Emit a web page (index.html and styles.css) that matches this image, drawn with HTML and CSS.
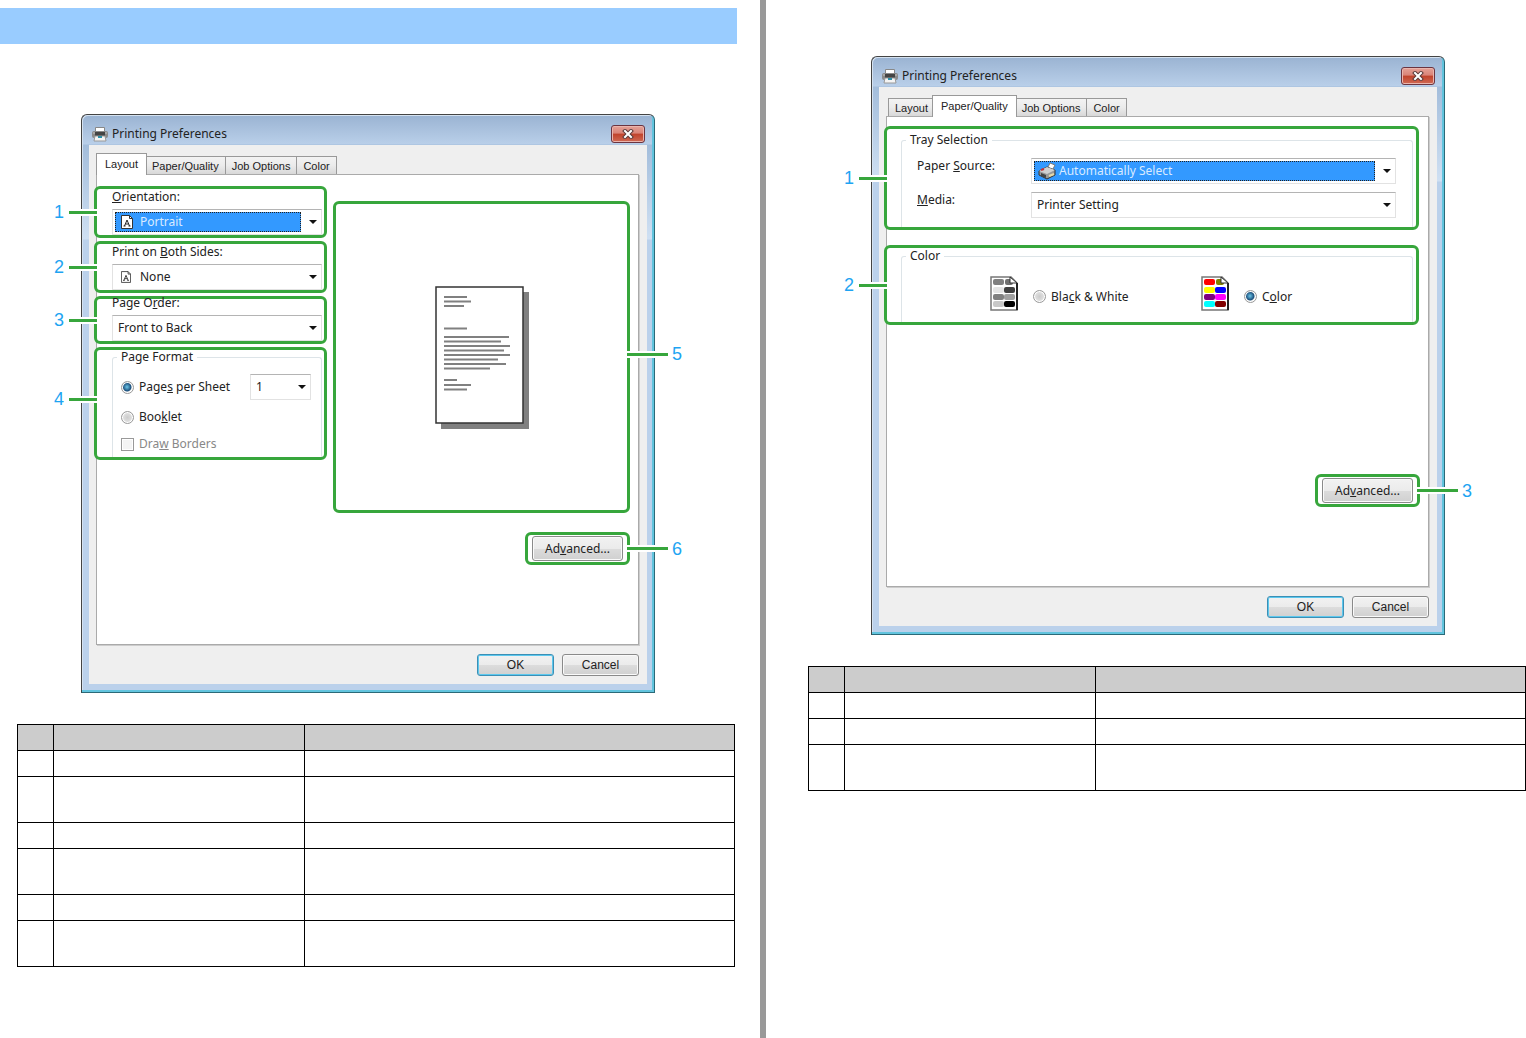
FILE: index.html
```html
<!DOCTYPE html>
<html lang="en">

<head>
    <meta charset="UTF-8">
    <meta name="viewport" content="width=device-width, initial-scale=1.0">
    <title>Printing Preferences</title>
    <link rel="stylesheet" href="styles.css">
</head>

<body>

    <!-- Shared icons -->
    <svg class="defs" width="0" height="0">
        <symbol id="printer" viewBox="0 0 18 16">
            <path d="M4.500 5V1.500h9V5" fill="#fff" stroke="#888" />
            <rect x="1" y="5" width="16" height="7" rx="2" fill="#8a8a8a" />
            <path d="M2 7h14" stroke="#c4c4c4" />
            <rect x="4" y="6" width="10" height="4" fill="#444" />
            <path d="M4 10h10l1 5H3z" fill="#f4f4f4" stroke="#999" />
            <rect x="7" y="10" width="4" height="2" fill="#2b8fa8" />
        </symbol>
        <symbol id="sheet" viewBox="0 0 12 14">
            <path d="M.5.5h8l3 3v10H.5z" fill="#fff" stroke="#333" />
            <path d="M8.500.5v3h3" fill="none" stroke="#333" />
            <path d="M3.500 11L6 5l2.500 6M4.500 9h3M2.500 11h2M7.500 11h2" fill="none" stroke="#222" />
        </symbol>
    </svg>

    <div class="spread">

        <div class="page page-left">
            <div class="banner"></div>

            <div class="window">
                <div class="title-bar">
                    <svg class="title-icon"><use href="#printer" /></svg>
                    <span class="title">Printing Preferences</span>
                    <button class="close" aria-label="Close">
                        <svg width="12" height="10" viewBox="0 0 12 10">
                            <path d="M3 2l6 6M9 2L3 8" stroke="#5b3a3a" stroke-width="4" stroke-linecap="square" />
                            <path d="M3 2l6 6M9 2L3 8" stroke="#fff" stroke-width="2" stroke-linecap="square" />
                        </svg>
                    </button>
                </div>
                <div class="window-body">
                    <div class="tabs">
                        <button class="tab active">Layout</button>
                        <button class="tab">Paper/Quality</button>
                        <button class="tab">Job Options</button>
                        <button class="tab">Color</button>
                    </div>
                    <div class="panel">
                        <div class="layout-row">
                            <div class="settings">
                                <div class="callout field">
                                    <span class="leader">1</span>
                                    <label for="orientation"><u>O</u>rientation:</label>
                                    <div class="combo selected">
                                        <svg class="combo-icon"><use href="#sheet" /></svg>
                                        <select id="orientation" class="with-icon">
                                            <option>Portrait</option>
                                        </select>
                                    </div>
                                </div>
                                <div class="callout field">
                                    <span class="leader">2</span>
                                    <label for="sides">Print on <u>B</u>oth Sides:</label>
                                    <div class="combo">
                                        <svg class="combo-icon small"><use href="#sheet" /></svg>
                                        <select id="sides" class="with-icon">
                                            <option>None</option>
                                        </select>
                                    </div>
                                </div>
                                <div class="callout field field-short">
                                    <span class="leader">3</span>
                                    <label for="order">Page O<u>r</u>der:</label>
                                    <div class="combo">
                                        <select id="order">
                                            <option>Front to Back</option>
                                        </select>
                                    </div>
                                </div>
                                <div class="callout format">
                                    <span class="leader">4</span>
                                    <fieldset>
                                        <legend>Page Format</legend>
                                        <div class="format-row">
                                            <label class="choice"><input type="radio" name="format" checked><span>Page<u>s</u> per Sheet</span></label>
                                            <div class="combo combo-count">
                                                <select aria-label="Pages per sheet">
                                                    <option>1</option>
                                                </select>
                                            </div>
                                        </div>
                                        <label class="choice"><input type="radio" name="format"><span>Boo<u>k</u>let</span></label>
                                        <label class="choice disabled"><input type="checkbox" disabled><span>Dra<u>w</u> Borders</span></label>
                                    </fieldset>
                                </div>
                            </div>
                            <div class="callout preview">
                                <span class="leader right">5</span>
                                <svg width="94" height="143" viewBox="0 0 94 143">
                                    <path d="M6 6h88v137H6z" fill="#808080" />
                                    <path d="M1 1h87v136H1z" fill="#fff" stroke="#333" stroke-width="1.500" />
                                    <g stroke="#808080" stroke-width="2">
                                        <path d="M9 11h23M9 15.500h27M9 20h20M9 42.500h23" />
                                        <path d="M9 51h65M9 55.500h57M9 60h66M9 64.500h60M9 69h66M9 73.500h54M9 78h62M9 82.500h46" />
                                        <path d="M9 94h13M9 99h27M9 103.500h23" />
                                    </g>
                                </svg>
                            </div>
                        </div>
                        <div class="callout advanced">
                            <span class="leader right">6</span>
                            <button class="btn">Ad<u>v</u>anced...</button>
                        </div>
                    </div>
                    <div class="window-footer">
                        <button class="btn default">OK</button>
                        <button class="btn">Cancel</button>
                    </div>
                </div>
            </div>

            <table>
                <colgroup><col class="col-no"><col class="col-item"><col></colgroup>
                <thead>
                    <tr><th></th><th></th><th></th></tr>
                </thead>
                <tbody>
                    <tr><td></td><td></td><td></td></tr>
                    <tr class="tall"><td></td><td></td><td></td></tr>
                    <tr><td></td><td></td><td></td></tr>
                    <tr class="tall"><td></td><td></td><td></td></tr>
                    <tr><td></td><td></td><td></td></tr>
                    <tr class="tall"><td></td><td></td><td></td></tr>
                </tbody>
            </table>
        </div>

        <div class="page page-right">
            <div class="window">
                <div class="title-bar">
                    <svg class="title-icon"><use href="#printer" /></svg>
                    <span class="title">Printing Preferences</span>
                    <button class="close" aria-label="Close">
                        <svg width="12" height="10" viewBox="0 0 12 10">
                            <path d="M3 2l6 6M9 2L3 8" stroke="#5b3a3a" stroke-width="4" stroke-linecap="square" />
                            <path d="M3 2l6 6M9 2L3 8" stroke="#fff" stroke-width="2" stroke-linecap="square" />
                        </svg>
                    </button>
                </div>
                <div class="window-body">
                    <div class="tabs">
                        <button class="tab">Layout</button>
                        <button class="tab active">Paper/Quality</button>
                        <button class="tab">Job Options</button>
                        <button class="tab">Color</button>
                    </div>
                    <div class="panel">
                        <div class="callout tray">
                            <span class="leader">1</span>
                            <fieldset>
                                <legend>Tray Selection</legend>
                                <div class="tray-grid">
                                    <label for="source">Paper <u>S</u>ource:</label>
                                    <div class="combo selected">
                                        <svg class="combo-icon wide" viewBox="0 0 18 18">
                                            <path d="M9 7l3-6 5 2-3 6z" fill="#fff" stroke="#777" />
                                            <path d="M1 9l8-4 8 3v5l-8 4-8-4z" fill="#999" stroke="#333" />
                                            <path d="M1 9l8-4 8 3-8 4z" fill="#d0d0d0" />
                                            <path d="M3 11l5 2v3l-5-2z" fill="#444" />
                                            <path d="M3 8l3-1" stroke="#c33" stroke-width="2" />
                                            <path d="M11 14l5-2" stroke="#e6d9a8" stroke-width="2" />
                                        </svg>
                                        <select id="source" class="with-icon">
                                            <option>Automatically Select</option>
                                        </select>
                                    </div>
                                    <label for="media"><u>M</u>edia:</label>
                                    <div class="combo">
                                        <select id="media">
                                            <option>Printer Setting</option>
                                        </select>
                                    </div>
                                </div>
                            </fieldset>
                        </div>
                        <div class="callout color">
                            <span class="leader">2</span>
                            <fieldset>
                                <legend>Color</legend>
                                <div class="color-options">
                                    <div class="color-option">
                                        <svg width="28" height="35" viewBox="0 0 28 35">
                                            <path d="M1 1h20l6 6v27H1z" fill="#fff" stroke="#777" stroke-width="1.500" />
                                            <path d="M27 7v27" stroke="#222" stroke-width="2" />
                                            <rect x="3" y="3" width="11" height="6" rx="2" fill="#808080" />
                                            <rect x="15" y="3" width="8" height="6" rx="2" fill="#707070" />
                                            <rect x="3" y="11" width="11" height="6" rx="2" fill="#e4e4e4" />
                                            <rect x="14" y="11" width="11" height="6" rx="2" fill="#404040" />
                                            <rect x="3" y="18" width="11" height="6" rx="2" fill="#808080" />
                                            <rect x="14" y="18" width="11" height="6" rx="2" fill="#a0a0a0" />
                                            <rect x="3" y="25" width="11" height="6" rx="2" fill="#c8c8c8" />
                                            <rect x="14" y="25" width="11" height="6" rx="2" fill="#000" />
                                            <path d="M20 1v6h7z" fill="#fff" stroke="#333" />
                                        </svg>
                                        <label class="choice"><input type="radio" name="color"><span>Bla<u>c</u>k &amp; White</span></label>
                                    </div>
                                    <div class="color-option">
                                        <svg width="28" height="35" viewBox="0 0 28 35">
                                            <path d="M1 1h20l6 6v27H1z" fill="#fff" stroke="#777" stroke-width="1.500" />
                                            <path d="M27 7v27" stroke="#222" stroke-width="2" />
                                            <rect x="3" y="3" width="11" height="6" rx="2" fill="#f00" />
                                            <rect x="15" y="3" width="8" height="6" rx="2" fill="#808000" />
                                            <rect x="3" y="11" width="11" height="6" rx="2" fill="#ff0" />
                                            <rect x="14" y="11" width="11" height="6" rx="2" fill="#00f" />
                                            <rect x="3" y="18" width="11" height="6" rx="2" fill="#800080" />
                                            <rect x="14" y="18" width="11" height="6" rx="2" fill="#f0f" />
                                            <rect x="3" y="25" width="11" height="6" rx="2" fill="#0ff" />
                                            <rect x="14" y="25" width="11" height="6" rx="2" fill="#800000" />
                                            <path d="M20 1v6h7z" fill="#fff" stroke="#333" />
                                        </svg>
                                        <label class="choice"><input type="radio" name="color" checked><span>C<u>o</u>lor</span></label>
                                    </div>
                                </div>
                            </fieldset>
                        </div>
                        <div class="callout advanced">
                            <span class="leader right">3</span>
                            <button class="btn">Ad<u>v</u>anced...</button>
                        </div>
                    </div>
                    <div class="window-footer">
                        <button class="btn default">OK</button>
                        <button class="btn">Cancel</button>
                    </div>
                </div>
            </div>

            <table>
                <colgroup><col class="col-no"><col class="col-item"><col></colgroup>
                <thead>
                    <tr><th></th><th></th><th></th></tr>
                </thead>
                <tbody>
                    <tr><td></td><td></td><td></td></tr>
                    <tr><td></td><td></td><td></td></tr>
                    <tr class="tall"><td></td><td></td><td></td></tr>
                </tbody>
            </table>
        </div>

    </div>

</body>

</html>
```
FILE: styles.css
```css
* {
    box-sizing: border-box;
}

body {
    margin: 0;
    background-color: #fff;
    color: #222;
    font-family: "Noto Sans", "Open Sans", sans-serif;
    font-size: 12px;
    line-height: 16px;
}

button,
select {
    font: inherit;
    color: inherit;
}

.defs {
    position: absolute;
}

/* Two facing pages with a grey rule between them */
.spread {
    display: grid;
    grid-template-columns: 1fr 1fr;
    min-height: 100vh;
    column-gap: 6px;
    background-color: #999;
}

.page {
    background-color: #fff;
}

.page-left {
    padding-top: 8px;
}

.page-right {
    padding-top: 56px;
}

.banner {
    height: 36px;
    margin: 0 23px 70px 0;
    background-color: #99ccff;
}

/* Dialog window */
.window {
    width: 574px;
    padding: 0 7px 8px;
    border: 1px solid #2b6a78;
    border-left-color: #444;
    border-top-color: #444;
    border-radius: 6px 6px 0 0;
    background: linear-gradient(#9ab3d2, #b9cfe9 29px, #a3bddb 30px, #cfe0f3 124px, #bbd1eb 125px);
    box-shadow: inset -2px -2px 0 #62c4de, inset 1px 1px 0 #d5e2f0;
}

.page-left .window {
    margin-left: 81px;
}

.page-right .window {
    margin-left: 105px;
}

.title-bar {
    display: flex;
    align-items: center;
    height: 30px;
    padding: 8px 2px 0;
}

.title-icon {
    width: 18px;
    height: 16px;
    margin-right: 3px;
}

.title {
    flex: 1;
}

.close {
    display: flex;
    align-items: center;
    justify-content: center;
    width: 34px;
    height: 18px;
    padding: 0;
    border: 1px solid #6b3440;
    border-radius: 3px;
    background: linear-gradient(#e5a197, #d98377 45%, #c0422b 50%, #d06a55);
    box-shadow: inset 0 0 0 1px #eab5ad;
}

.window-body {
    padding: 8px 8px 8px 7px;
    background-color: #efefef;
}

.tabs {
    display: flex;
    align-items: flex-end;
    height: 21px;
    padding-left: 2px;
    font-family: "Liberation Sans", Arial, sans-serif;
    font-size: 11px;
}

.tab {
    height: 18px;
    margin-right: -1px;
    padding: 0 6px;
    border: 1px solid #999;
    border-bottom: none;
    background: linear-gradient(#f3f3f3, #ebebeb 50%, #d8d8d8);
    line-height: 16px;
}

.tab.active {
    z-index: 1;
    height: 22px;
    margin: 0 -2px -1px;
    padding: 0 8px 2px;
    background: #fff;
}

.panel {
    padding-bottom: 79px;
    border: 1px solid #aaa;
    background-color: #fff;
    box-shadow: 1px 1px 0 #ccc;
}

.layout-row {
    display: flex;
    align-items: flex-start;
    gap: 6px;
    margin: 11px 8px 19px -3px;
}

.settings {
    display: flex;
    flex-direction: column;
    gap: 3px;
    width: 233px;
}

/* Green numbered callouts */
.callout {
    position: relative;
    border: 3px solid #37a63c;
    border-radius: 6px;
}

.leader {
    position: absolute;
    top: 50%;
    right: 100%;
    display: flex;
    align-items: center;
    gap: 5px;
    margin-top: -10px;
    color: #1ea4f2;
    font-family: "Liberation Sans", Arial, sans-serif;
    font-size: 18px;
    line-height: 20px;
}

.leader::after {
    content: "";
    width: 28px;
    height: 3px;
    background-color: #37a63c;
    box-shadow: 0 2px 0 #fff, 0 -2px 0 #fff;
}

.leader.right {
    right: auto;
    left: 100%;
    flex-direction: row-reverse;
    gap: 4px;
}

.leader.right::after {
    width: 41px;
}

.field {
    display: flex;
    flex-direction: column;
    justify-content: flex-end;
    height: 52px;
    padding: 0 2px 0 15px;
}

.field > label {
    flex-shrink: 0;
    margin-bottom: 4px;
}

.field-short {
    height: 48px;
}

.combo {
    position: relative;
    flex-shrink: 0;
    height: 26px;
    padding: 2px 20px 2px 2px;
    border: 1px solid #e2e2e2;
    border-top-color: #b4b4b4;
    background-color: #fff;
}

.combo::after {
    content: "";
    position: absolute;
    top: 10px;
    right: 4px;
    border: 4px solid transparent;
    border-top-color: #111;
    border-bottom: none;
}

.combo select {
    display: block;
    width: 100%;
    height: 20px;
    padding: 0 2px;
    border: 1px dotted transparent;
    border-radius: 0;
    background-color: transparent;
    line-height: 18px;
    appearance: none;
}

.combo select.with-icon {
    padding-left: 24px;
}

.combo.selected select {
    border-color: #222;
    background-color: #3399ff;
    color: #d9ebff;
}

.combo-icon {
    position: absolute;
    top: 5px;
    left: 8px;
    width: 12px;
    height: 14px;
}

.combo-icon.small {
    width: 10px;
    height: 12px;
    top: 6px;
}

.combo-icon.wide {
    top: 3px;
    left: 6px;
    width: 18px;
    height: 18px;
}

fieldset {
    min-width: 0;
    margin: 0;
    padding: 0;
    border: 1px solid #dde4e8;
    border-bottom: none;
    border-radius: 3px 3px 0 0;
}

legend {
    padding: 0 4px;
    margin-left: 4px;
    line-height: 14px;
}

.format {
    height: 113px;
    padding: 0 2px 0 15px;
}

.format .leader {
    top: 49px;
}

.format fieldset {
    display: flex;
    flex-direction: column;
    gap: 7px;
    height: 107px;
    padding-top: 10px;
}

.format-row {
    display: flex;
    justify-content: space-between;
    padding-right: 10px;
}

.combo-count {
    width: 61px;
}

.choice {
    display: flex;
    align-items: center;
    gap: 5px;
    min-height: 20px;
}

.format .choice {
    padding-left: 8px;
}

.choice input {
    width: 13px;
    height: 13px;
    margin: 0;
    border: 1px solid #999;
    background-color: #f4f4f4;
    box-shadow: inset 0 0 0 1px #fff;
    appearance: none;
}

.choice input[type="radio"] {
    border-radius: 50%;
    background: radial-gradient(#ccc, #eee);
}

.choice input[type="radio"]:checked {
    background: radial-gradient(circle at 5px 5px, #6cc6e8, #1c4f7c 4px, #eee 5px);
}

.choice.disabled {
    color: #888;
}

.preview {
    display: flex;
    flex: 1;
    align-items: center;
    justify-content: center;
    height: 312px;
    margin-top: 15px;
}

.preview .leader {
    top: 150px;
}

.advanced {
    width: 105px;
    margin: 0 8px 0 auto;
    padding: 1px 4px;
}

.btn {
    width: 77px;
    height: 22px;
    padding: 0;
    border: 1px solid #8a8a8a;
    border-radius: 3px;
    background: linear-gradient(#f2f2f2, #ebebeb 50%, #dcdcdc 51%, #d0d0d0);
    box-shadow: inset 0 0 0 1px #fafafa;
    line-height: 18px;
}

.btn.default {
    border-color: #3c8fb5;
    box-shadow: inset 0 0 0 1px #5cc8ee;
}

.advanced .btn {
    display: block;
    width: 100%;
    height: 25px;
}

.window-footer {
    display: flex;
    justify-content: flex-end;
    gap: 8px;
    padding-top: 9px;
    font-family: "Liberation Sans", Arial, sans-serif;
    font-size: 12px;
}

/* Paper/Quality tab */
.tray,
.color {
    margin: 9px 9px 15px -3px;
    padding: 4px 3px 0 14px;
}

.tray fieldset {
    height: 94px;
    padding-top: 11px;
}

.tray-grid {
    display: grid;
    grid-template-columns: 114px 1fr;
    align-items: start;
    row-gap: 8px;
    padding: 0 16px 0 15px;
}

.color {
    margin-bottom: 149px;
    padding-top: 1px;
}

.color fieldset {
    height: 73px;
    padding-top: 13px;
}

.color-options {
    display: flex;
    padding-left: 88px;
}

.color-option {
    display: flex;
    align-items: flex-end;
    gap: 15px;
    width: 211px;
}

.color-option .choice {
    height: 29px;
}

/* Description tables */
table {
    width: calc(100% - 42px);
    border-collapse: collapse;
    table-layout: fixed;
}

.page-left table {
    margin: 31px 25px 0 17px;
}

.page-right table {
    margin: 31px 0 0 42px;
}

.col-no {
    width: 36px;
}

.col-item {
    width: 251px;
}

th,
td {
    height: 26px;
    padding: 0;
    border: 1px solid #000;
}

th {
    background-color: #ccc;
}

.tall td {
    height: 46px;
}
```
